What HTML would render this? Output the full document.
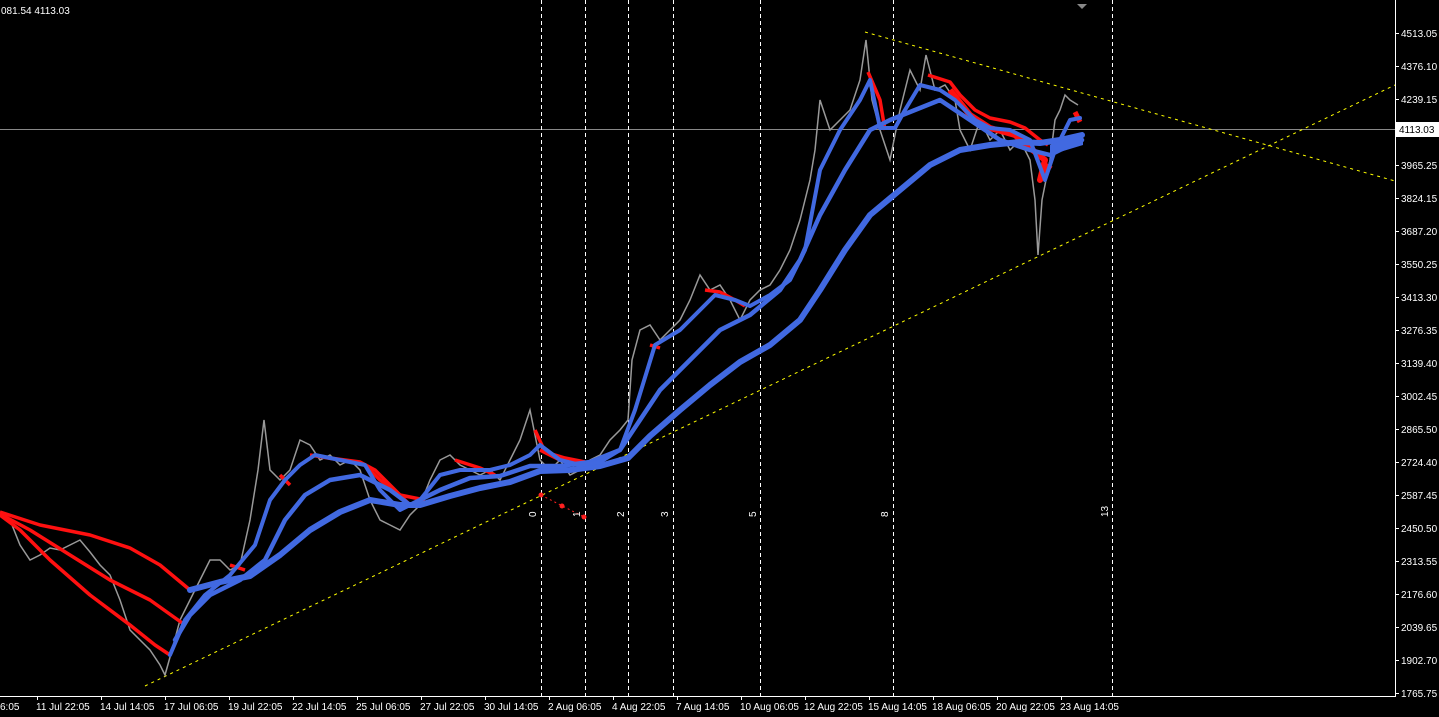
<!DOCTYPE html>
<html><head><meta charset="utf-8"><style>
html,body{margin:0;padding:0;background:#000;width:1439px;height:717px;overflow:hidden}
svg{display:block}
text{font-family:"Liberation Sans",sans-serif;font-size:10px;fill:#fff}
</style></head><body>
<svg width="1439" height="717" viewBox="0 0 1439 717" xmlns="http://www.w3.org/2000/svg">
<rect width="1439" height="717" fill="#000"/>
<line x1="1395.5" y1="0" x2="1395.5" y2="696" stroke="#fff"/>
<line x1="0" y1="696.5" x2="1396" y2="696.5" stroke="#fff"/>
<line x1="0" y1="129.5" x2="1395" y2="129.5" stroke="#888"/>
<g stroke="#fff" stroke-dasharray="4,3">
<line x1="541.5" y1="0" x2="541.5" y2="696"/><line x1="585.5" y1="0" x2="585.5" y2="696"/>
<line x1="628.5" y1="0" x2="628.5" y2="696"/><line x1="673.5" y1="0" x2="673.5" y2="696"/>
<line x1="760.5" y1="0" x2="760.5" y2="696"/><line x1="893.5" y1="0" x2="893.5" y2="696"/>
<line x1="1112.5" y1="0" x2="1112.5" y2="696"/>
</g>
<g stroke="#ffff00" stroke-dasharray="3,4" stroke-width="1">
<line x1="145" y1="686" x2="1395" y2="85"/>
<line x1="865" y1="32" x2="1395" y2="181"/>
</g>
<polygon points="1077,4 1087,4 1082,9" fill="#888"/>
<polyline fill="none" stroke="#999" stroke-width="1.5" points="0,512 10,520 20,545 30,560 40,555 50,548 60,550 70,545 80,540 90,552 100,565 110,575 120,600 130,630 140,640 150,650 160,665 165,675 172,650 180,620 190,600 200,580 210,560 220,560 230,570 240,565 250,520 258,470 264,420 270,470 280,480 290,470 300,440 310,445 320,460 330,455 340,465 350,460 360,470 370,500 380,520 390,525 400,530 410,515 420,505 430,480 440,460 450,455 460,465 470,470 480,475 490,470 500,480 510,460 520,440 530,410 540,460 550,470 560,460 570,475 580,470 590,460 600,455 610,440 620,430 628,420 632,360 640,330 650,325 660,340 670,330 680,320 690,300 700,275 710,290 720,285 730,300 740,320 750,300 760,290 770,285 780,270 790,250 800,220 810,180 815,150 820,100 830,130 840,120 850,110 860,80 866,40 872,100 880,130 890,160 900,110 910,70 920,90 926,55 935,90 945,85 955,100 960,130 970,150 980,120 990,140 1000,130 1010,150 1020,140 1030,160 1035,200 1038,255 1042,200 1050,160 1055,120 1060,110 1065,95 1070,100 1078,105"/>
<g fill="none" stroke="#ff1010" stroke-width="3.5" stroke-linejoin="round">
<polyline points="0,512 40,525 90,535 130,548 160,565 190,590"/>
<polyline points="0,514 30,530 70,555 110,580 150,600 185,625"/>
<polyline points="0,515 20,530 50,560 90,595 130,625 155,645 170,655"/>
<polyline points="230,565 245,570"/><polyline points="280,475 290,485"/>
<polyline points="310,455 340,460 365,465 380,480 400,495 425,500"/>
<polyline points="330,458 360,462 375,470 395,490 410,505"/>
<polyline points="455,460 480,468 495,475"/>
<polyline points="535,430 545,452 565,458 585,462"/>
<polyline points="540,450 560,460 580,465 595,468"/>
<polyline points="650,345 660,348"/><polyline points="705,290 720,292 735,300 745,306"/>
<polyline points="868,72 880,100 885,130"/>
<polyline points="928,75 950,82 960,95 975,110 990,118 1010,122 1025,128 1040,140 1048,145"/>
<polyline stroke-width="6" points="950,90 970,115 990,128 1015,135 1030,148 1045,160 1040,180 1050,165"/>
<polyline stroke-width="5" points="1075,112 1080,122"/>
</g>
<g fill="none" stroke="#4169e1" stroke-linejoin="round" stroke-linecap="round">
<polyline stroke-width="6" points="190,590 220,582 250,576 280,555 310,530 340,512 370,500 400,505 420,505 450,496 480,488 510,482 540,471 570,470 600,466 628,458 650,436 680,410 710,385 740,362 770,345 800,320 820,290 845,250 870,215 900,190 930,165 960,150 990,145 1020,142 1040,143 1060,140 1082,135"/>
<polyline stroke-width="4.5" points="175,640 190,615 210,595 240,580 265,560 285,520 305,495 330,480 360,475 390,490 410,505 440,490 470,478 500,476 530,466 560,466 590,462 620,450 640,420 660,390 690,360 720,330 750,315 780,290 800,260 820,215 845,170 870,130 890,120 910,112 940,100 970,120 1000,140 1030,150 1050,155 1070,145 1082,140"/>
<polyline stroke-width="4" points="170,655 185,620 205,595 230,575 255,545 270,500 285,480 300,465 315,455 330,458 350,462 365,465 380,490 400,510 420,500 440,475 460,470 490,470 510,465 530,455 540,445 560,460 580,465 600,462 620,450 635,410 655,345 680,330 700,310 715,295 735,300 750,306 770,295 790,280 805,250 820,170 840,130 860,100 870,80 880,128 895,128 905,110 920,85 940,90 955,100 975,120 990,128 1010,130 1030,140 1045,180 1055,150 1070,120 1080,118"/>
</g>
<polygon points="1050,145 1083,132 1083,145 1050,155" fill="#4169e1"/>
<g fill="#ff2020"><circle cx="541" cy="495" r="2.5"/><circle cx="562" cy="506" r="2.5"/><circle cx="584" cy="517" r="2.5"/></g>
<polyline points="541,495 584,517" stroke="#ff2020" stroke-dasharray="2,3" fill="none"/>
<g>
<text transform="translate(536,517) rotate(-90)">0</text>
<text transform="translate(580,517) rotate(-90)">1</text>
<text transform="translate(624,517) rotate(-90)">2</text>
<text transform="translate(668,517) rotate(-90)">3</text>
<text transform="translate(756,517) rotate(-90)">5</text>
<text transform="translate(888,517) rotate(-90)">8</text>
<text transform="translate(1108,517) rotate(-90)">13</text>
</g>
<text x="1" y="14">081.54 4113.03</text>
<g>
<text x="1401" y="37">4513.05</text><text x="1401" y="70">4376.10</text><text x="1401" y="103">4239.15</text>
<text x="1401" y="169">3965.25</text><text x="1401" y="202">3824.15</text><text x="1401" y="235">3687.20</text>
<text x="1401" y="268">3550.25</text><text x="1401" y="301">3413.30</text><text x="1401" y="334">3276.35</text>
<text x="1401" y="367">3139.40</text><text x="1401" y="400">3002.45</text><text x="1401" y="433">2865.50</text>
<text x="1401" y="466">2724.40</text><text x="1401" y="499">2587.45</text><text x="1401" y="532">2450.50</text>
<text x="1401" y="565">2313.55</text><text x="1401" y="598">2176.60</text><text x="1401" y="631">2039.65</text>
<text x="1401" y="664">1902.70</text><text x="1401" y="697">1765.75</text>
</g>
<g stroke="#fff">
<line x1="1396" y1="33.5" x2="1399" y2="33.5"/><line x1="1396" y1="66.5" x2="1399" y2="66.5"/><line x1="1396" y1="99.5" x2="1399" y2="99.5"/>
<line x1="1396" y1="165.5" x2="1399" y2="165.5"/><line x1="1396" y1="198.5" x2="1399" y2="198.5"/><line x1="1396" y1="231.5" x2="1399" y2="231.5"/>
<line x1="1396" y1="264.5" x2="1399" y2="264.5"/><line x1="1396" y1="297.5" x2="1399" y2="297.5"/><line x1="1396" y1="330.5" x2="1399" y2="330.5"/>
<line x1="1396" y1="363.5" x2="1399" y2="363.5"/><line x1="1396" y1="396.5" x2="1399" y2="396.5"/><line x1="1396" y1="429.5" x2="1399" y2="429.5"/>
<line x1="1396" y1="462.5" x2="1399" y2="462.5"/><line x1="1396" y1="495.5" x2="1399" y2="495.5"/><line x1="1396" y1="528.5" x2="1399" y2="528.5"/>
<line x1="1396" y1="561.5" x2="1399" y2="561.5"/><line x1="1396" y1="594.5" x2="1399" y2="594.5"/><line x1="1396" y1="627.5" x2="1399" y2="627.5"/>
<line x1="1396" y1="660.5" x2="1399" y2="660.5"/><line x1="1396" y1="693.5" x2="1399" y2="693.5"/>
</g>
<rect x="1396" y="122" width="43" height="15" fill="#fff"/>
<text x="1399" y="133" style="fill:#000">4113.03</text>
<g>
<text x="0" y="710">6:05</text><text x="36" y="710">11 Jul 22:05</text><text x="100" y="710">14 Jul 14:05</text>
<text x="164" y="710">17 Jul 06:05</text><text x="228" y="710">19 Jul 22:05</text><text x="292" y="710">22 Jul 14:05</text>
<text x="356" y="710">25 Jul 06:05</text><text x="420" y="710">27 Jul 22:05</text><text x="484" y="710">30 Jul 14:05</text>
<text x="548" y="710">2 Aug 06:05</text><text x="612" y="710">4 Aug 22:05</text><text x="676" y="710">7 Aug 14:05</text>
<text x="740" y="710">10 Aug 06:05</text><text x="804" y="710">12 Aug 22:05</text><text x="868" y="710">15 Aug 14:05</text>
<text x="932" y="710">18 Aug 06:05</text><text x="996" y="710">20 Aug 22:05</text><text x="1060" y="710">23 Aug 14:05</text>
</g>
<g stroke="#fff">
<line x1="37.5" y1="697" x2="37.5" y2="700"/><line x1="101.5" y1="697" x2="101.5" y2="700"/><line x1="165.5" y1="697" x2="165.5" y2="700"/>
<line x1="229.5" y1="697" x2="229.5" y2="700"/><line x1="293.5" y1="697" x2="293.5" y2="700"/><line x1="357.5" y1="697" x2="357.5" y2="700"/>
<line x1="421.5" y1="697" x2="421.5" y2="700"/><line x1="485.5" y1="697" x2="485.5" y2="700"/><line x1="549.5" y1="697" x2="549.5" y2="700"/>
<line x1="613.5" y1="697" x2="613.5" y2="700"/><line x1="677.5" y1="697" x2="677.5" y2="700"/><line x1="741.5" y1="697" x2="741.5" y2="700"/>
<line x1="805.5" y1="697" x2="805.5" y2="700"/><line x1="869.5" y1="697" x2="869.5" y2="700"/><line x1="933.5" y1="697" x2="933.5" y2="700"/>
<line x1="997.5" y1="697" x2="997.5" y2="700"/><line x1="1061.5" y1="697" x2="1061.5" y2="700"/>
</g>
</svg>
</body></html>
